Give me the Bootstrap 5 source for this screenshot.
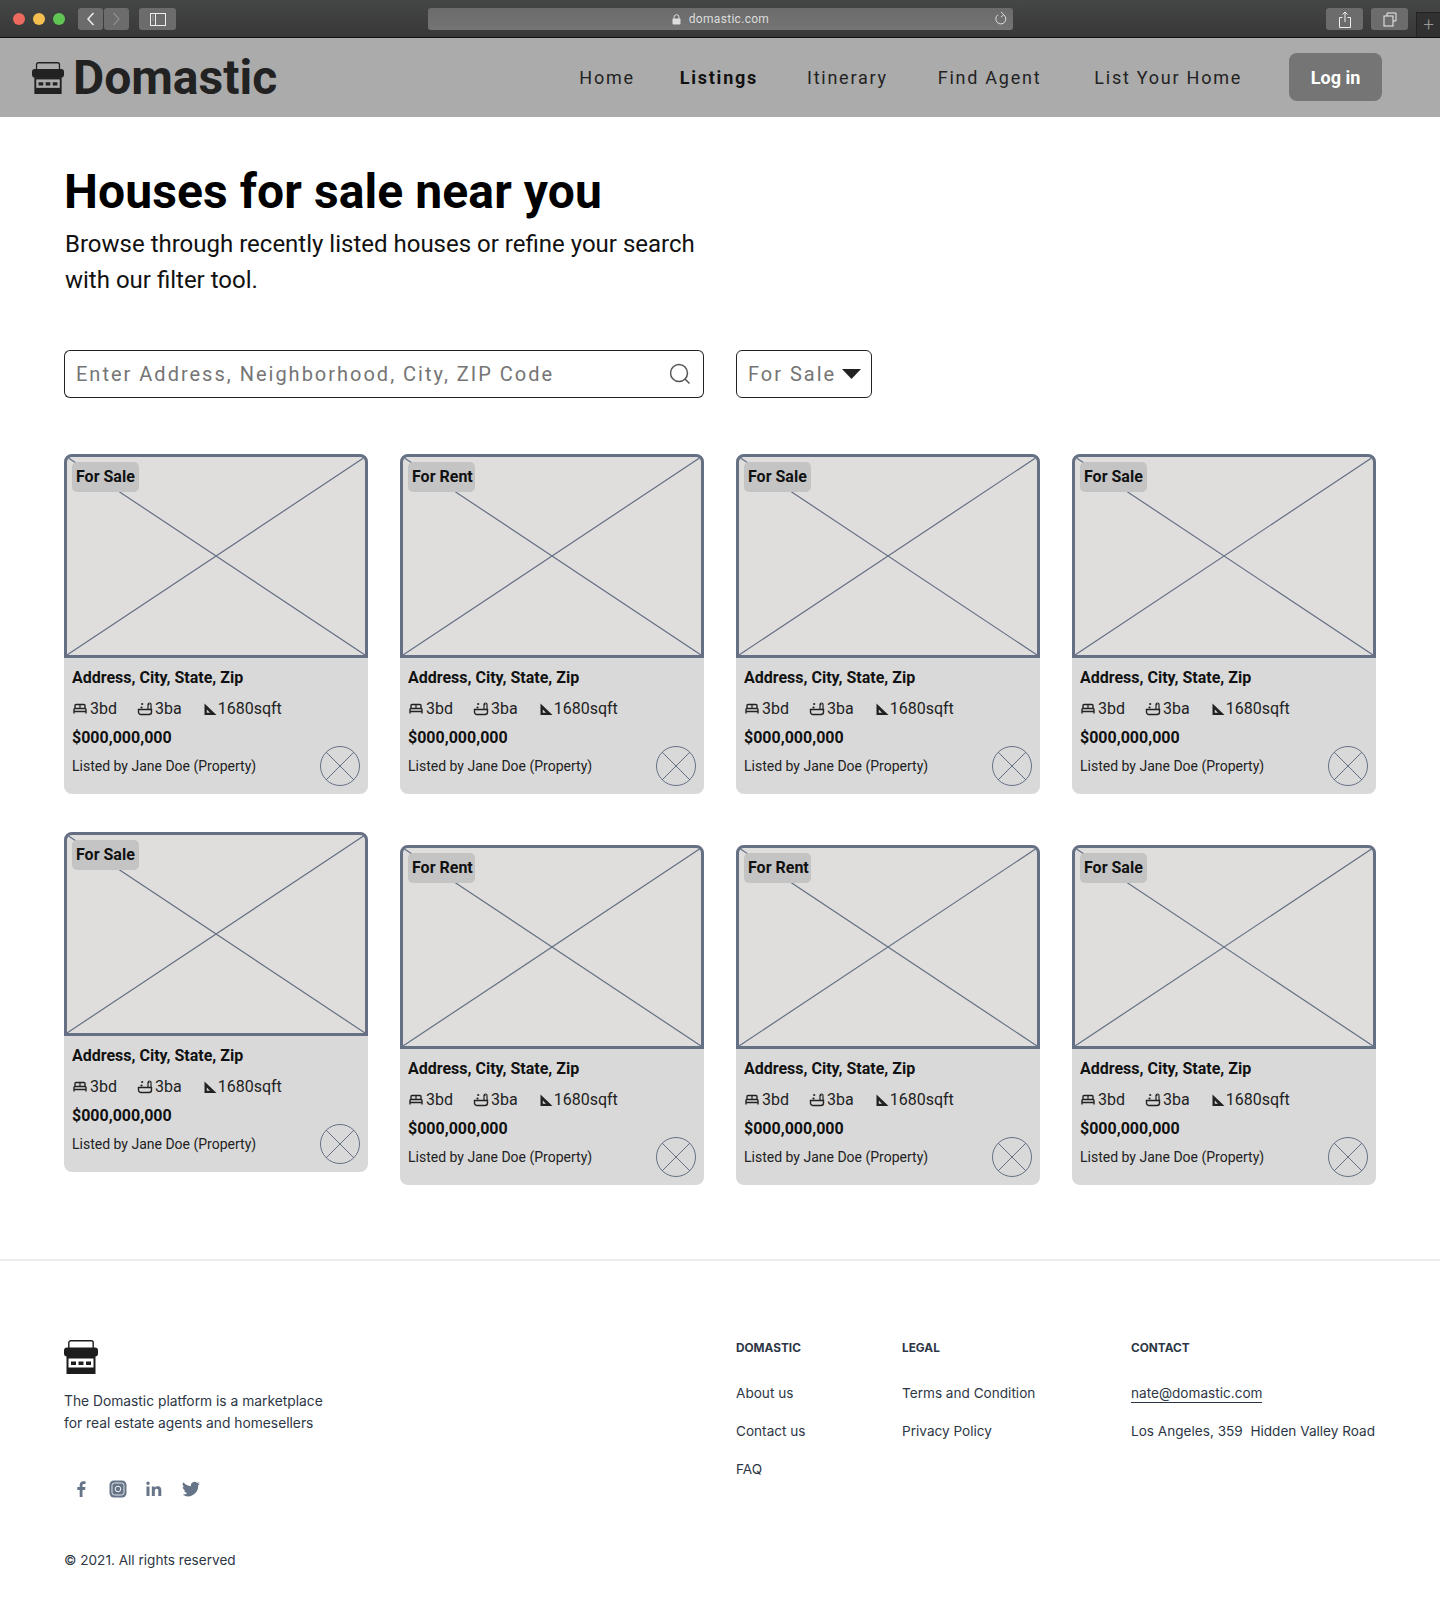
<!DOCTYPE html>
<html lang="en">
<head>
    <meta charset="UTF-8">
    <meta name="viewport" content="width=device-width, initial-scale=1.0">
    <title>Domastic - Listings</title>
    <!-- Bootstrap CSS -->
    <link href="https://cdn.jsdelivr.net/npm/bootstrap@5.3.0/dist/css/bootstrap.min.css" rel="stylesheet">
    <style>
        body { font-family: Roboto, "Liberation Sans", sans-serif; color: #111; background: #fff; min-height: 1612px; }

        /* browser chrome */
        .chrome-bar { height: 38px; background: linear-gradient(#454746, #373837); border-bottom: 1px solid #111; padding: 8px 0 0 13px; }
        .dot { width: 12px; height: 12px; border-radius: 50%; margin-right: 8px; margin-top: 5px; }
        .dot-red { background: #ec6a5e; }
        .dot-yellow { background: #f4bf4f; }
        .dot-green { background: #61c554; }
        .chrome-nav { margin-left: 5px; gap: 1px; }
        .chrome-btn { width: 25px; height: 22px; background: #6b6c6b; border-radius: 3px; border: 0; padding: 0; display: flex; align-items: center; justify-content: center; }
        .chrome-btn-wide { width: 37px; }
        .chrome-side { margin-left: 10px; }
        .chrome-share { margin-left: 313px; }
        .chrome-url { width: 585px; height: 22px; margin-left: 252px; background: linear-gradient(#6a6b6a, #737473); border-radius: 3px; color: #ddd; font-size: 12px; letter-spacing: .3px; font-family: Roboto, "Liberation Sans", sans-serif; position: relative; }
        .chrome-reload { position: absolute; right: 5px; top: 3px; }
        .chrome-plus { width: 24px; height: 25px; margin-top: 4px; border-left: 1px solid #222; border-top: 1px solid #222; background: #303130; color: #999; font-size: 19px; line-height: 24px; text-align: center; font-weight: 300; }

        /* nav */
        .top-nav { --store-hole: #ababab; background: #ababab; height: 79px; padding: 0 58px 1px 32px; }
        .brand-text { font-size: 48px; font-weight: 700; color: #222; line-height: 1; }
        .top-nav .navbar-brand { padding: 2px 0 0; margin: 0; gap: 9px; }
        .top-nav .navbar-nav { margin-right: 47px; }
        .top-nav .nav-link { font-size: 18px; letter-spacing: 1.75px; color: #222; padding: 0; }
        .top-nav .nav-link.active { font-weight: 700; color: #111; }
        .top-nav .nav-item:nth-child(2) { margin-left: 45px; }
        .top-nav .nav-item:nth-child(3) { margin-left: 49px; }
        .top-nav .nav-item:nth-child(4) { margin-left: 50px; }
        .top-nav .nav-item:nth-child(5) { margin-left: 53px; }
        .login-btn { width: 93px; height: 48px; background: #757575; color: #fff; font-size: 18px; font-weight: 700; border: 0; border-radius: 8px; }

        /* intro */
        .page-wrap { padding: 0 64px; }
        .page-title { font-size: 48px; font-weight: 700; line-height: 56px; letter-spacing: .1px; color: #000; margin: 47px 0 0; }
        .page-sub { font-size: 24px; line-height: 36px; width: 660px; margin: 6px 0 0 1px; color: #111; }

        /* filters */
        .filter-row { margin-top: 52px; gap: 32px; }
        .search-group { width: 640px; height: 48px; }
        .search-group .form-control { border: 1px solid #222; border-right: 0; border-radius: 6px 0 0 6px; font-size: 20px; letter-spacing: 2px; padding: 0 11px; color: #757575; }
        .search-group .form-control::placeholder { color: #757575; }
        .search-group .input-group-text { background: #fff; border: 1px solid #222; border-left: 0; border-radius: 0 6px 6px 0; padding: 0 12px 0 0; }
        .status-btn { width: 136px; height: 48px; border: 1px solid #222; border-radius: 6px; background: #fff; color: #757575; font-size: 20px; letter-spacing: 2px; padding: 0 0 0 11px; display: flex; align-items: center; gap: 6px; }

        /* listing cards */
        .list-grid { --bs-gutter-x: 32px; --bs-gutter-y: 0; }
        .list-grid-one { margin-top: 56px; }
        .list-grid-two { margin-top: 51px; }
        .raised { margin-top: -13px; }
        .tile { background: #d9d9d9; border-radius: 8px; height: 340px; }
        .tile-photo { position: relative; height: 204px; background: #dfdedd; border: 3px solid #667085; border-radius: 8px 8px 0 0; overflow: hidden; }
        .tile-photo svg { display: block; width: 100%; height: 100%; }
        .tile-tag { position: absolute; left: 5px; top: 5px; width: 67px; height: 30px; line-height: 30px; padding-left: 4px; background: #c4c4c4; border-radius: 5px; font-size: 16px; font-weight: 700; color: #111; }
        .tile-body { padding: 10px 8px 0; position: relative; }
        .tile-addr { font-size: 16px; font-weight: 700; line-height: 20px; color: #111; }
        .tile-specs { font-size: 16px; line-height: 20px; margin-top: 11px; color: #222; gap: 20px; }
        .tile-spec { display: flex; align-items: center; gap: 2px; }
        .tile-spec:last-child { gap: 0; }
        .tile-price { font-size: 16px; font-weight: 700; line-height: 20px; margin-top: 9px; color: #111; }
        .tile-owner { font-size: 14px; line-height: 20px; margin-top: 8px; color: #222; }
        .tile-avatar { position: absolute; right: 8px; top: 88px; }

        /* footer */
        .site-foot { --store-hole: #fff; border-top: 2px solid #ececec; margin-top: 74px; padding: 79px 62px 0 64px; font-family: Inter, "Liberation Sans", sans-serif; color: #2d3645; font-size: 13.6px; }
        .foot-about { width: 672px; }
        .foot-about p { font-size: 13.8px; line-height: 22px; margin: 16px 0 0; }
        .foot-social { margin: 46px 0 0 8px; gap: 18.5px; align-items: center; }
        .foot-copy { margin-top: 52px; }
        .foot-col { margin-top: 1px; }
        .foot-col-one { width: 166px; }
        .foot-col-two { width: 229px; }
        .foot-head { font-size: 11.8px; font-weight: 700; line-height: 14px; margin-bottom: 28px; color: #2d3645; }
        .foot-col a, .foot-col span { display: block; line-height: 20px; margin-bottom: 18px; color: #2d3645; text-decoration: none; white-space: nowrap; }
        .foot-col a.foot-mail { display: inline-block; border-bottom: 1px solid #2d3645; line-height: 18px; margin-bottom: 18px; }
    </style>
</head>
<body>
<!-- Store icon used in navbar and footer -->
<svg width="0" height="0" class="position-absolute">
    <symbol id="store" viewBox="0 0 34 34">
        <rect x="4.800" y=".8" width="24.400" height="9" rx="2" fill="none" stroke="currentColor" stroke-width="1.400"/>
        <path d="M3 7.500h28a3 3 0 0 1 3 3v3a3 3 0 0 1-3 3H3a3 3 0 0 1-3-3v-3a3 3 0 0 1 3-3z" fill="currentColor"/>
        <path d="M2.500 16h29v18h-29z" fill="currentColor"/>
        <path d="M4.500 18.500h25v9h-25z" fill="var(--store-hole)"/>
        <path d="M7 21.500h5v3.500H7zM14.500 21.500h5v3.500h-5zM22 21.500h5v3.500h-5z" fill="currentColor"/>
    </symbol>
    <symbol id="bed" viewBox="0 0 16 16">
        <path d="M3 7.500V4.500a1 1 0 0 1 1-1h8a1 1 0 0 1 1 1v3M2 12.500V8.500a1 1 0 0 1 1-1h10a1 1 0 0 1 1 1v4M2 10.500h12" fill="none" stroke="currentColor" stroke-width="1.400"/>
        <path d="M8 3.500v4" stroke="currentColor" stroke-width="1.200"/>
    </symbol>
    <symbol id="bath" viewBox="0 0 16 16">
        <path d="M1.500 8.500h13v2.500a2.500 2.500 0 0 1-2.500 2.500H4A2.500 2.500 0 0 1 1.500 11z" fill="none" stroke="currentColor" stroke-width="1.400"/>
        <path d="M11 8.500V3.500a1.500 1.500 0 0 1 3 0v5M10.500 3.500h2" fill="none" stroke="currentColor" stroke-width="1.200"/>
        <circle cx="4.500" cy="6.500" r="1.100" fill="currentColor"/><circle cx="5.200" cy="3" r="1.100" fill="currentColor"/>
    </symbol>
    <symbol id="square" viewBox="0 0 16 16">
        <path d="M2.500 2.500v11.500h12z" fill="currentColor"/>
        <path d="M4.800 8.500v3.200h3.200z" fill="#d9d9d9"/>
    </symbol>
</svg>

<!-- Browser bar -->
<div class="chrome-bar d-flex">
    <div class="dot dot-red"></div>
    <div class="dot dot-yellow"></div>
    <div class="dot dot-green"></div>
    <div class="d-flex chrome-nav">
        <button class="chrome-btn" aria-label="Back"><svg width="9" height="14" viewBox="0 0 9 14"><path d="M7.500 1L2 7l5.500 6" fill="none" stroke="#eee" stroke-width="1.500"/></svg></button>
        <button class="chrome-btn" aria-label="Forward"><svg width="9" height="14" viewBox="0 0 9 14"><path d="M1.500 1L7 7l-5.500 6" fill="none" stroke="#8c8c8c" stroke-width="1.300"/></svg></button>
    </div>
    <button class="chrome-btn chrome-btn-wide chrome-side" aria-label="Sidebar"><svg width="16" height="13" viewBox="0 0 16 13"><rect x=".5" y=".5" width="15" height="12" fill="none" stroke="#eee"/><path d="M5.500 0v13" stroke="#eee"/><path d="M2 3h2M2 5h2M2 7h2" stroke="#999"/></svg></button>
    <div class="chrome-url d-flex align-items-center justify-content-center gap-2">
        <svg width="9" height="11" viewBox="0 0 9 11"><path d="M2 5V3.200a2.500 2.500 0 0 1 5 0V5" fill="none" stroke="#ddd"/><rect x=".5" y="4.500" width="8" height="6" rx="1" fill="#ddd"/></svg>
        <span>domastic.com</span>
        <svg class="chrome-reload" width="14" height="16" viewBox="0 0 14 16"><path d="M9.500 3.700A5 5 0 1 1 4 3.800M7 1l2.800 2.700L7 6" fill="none" stroke="#ddd"/></svg>
    </div>
    <button class="chrome-btn chrome-btn-wide chrome-share" aria-label="Share"><svg width="12" height="17" viewBox="0 0 12 17"><path d="M3.500 6.500H.5v10h11v-10h-3M6 11V1M3.500 3.500L6 1l2.500 2.500" fill="none" stroke="#eee"/></svg></button>
    <button class="chrome-btn chrome-btn-wide ms-2" aria-label="Tabs"><svg width="14" height="15" viewBox="0 0 14 15"><path d="M4 4V1h9v8h-3" fill="none" stroke="#eee"/><rect x="1" y="4" width="9" height="10" fill="none" stroke="#eee"/></svg></button>
    <div class="chrome-plus ms-auto">+</div>
</div>

<!-- Navbar -->
<nav class="navbar top-nav flex-nowrap">
    <a class="navbar-brand d-flex align-items-center" href="#">
        <svg width="32" height="32" style="color:#222"><use href="#store"/></svg>
        <span class="brand-text">Domastic</span>
    </a>
    <div class="d-flex align-items-center">
        <ul class="navbar-nav flex-row align-items-center">
            <li class="nav-item"><a class="nav-link" href="#">Home</a></li>
            <li class="nav-item"><a class="nav-link active" href="#">Listings</a></li>
            <li class="nav-item"><a class="nav-link" href="#">Itinerary</a></li>
            <li class="nav-item"><a class="nav-link" href="#">Find Agent</a></li>
            <li class="nav-item"><a class="nav-link" href="#">List Your Home</a></li>
        </ul>
        <button class="btn login-btn">Log in</button>
    </div>
</nav>

<!-- Main Content -->
<main class="page-wrap">
    <h1 class="page-title">Houses for sale near you</h1>
    <p class="page-sub">Browse through recently listed houses or refine your search with our filter tool.</p>

    <div class="d-flex filter-row">
        <div class="input-group search-group">
            <input type="text" class="form-control" placeholder="Enter Address, Neighborhood, City, ZIP Code">
            <span class="input-group-text">
                <svg width="22" height="22" viewBox="0 0 22 22"><circle cx="10" cy="10" r="8.500" fill="none" stroke="#555" stroke-width="1.500"/><path d="M16 16l4.500 4.500" stroke="#555" stroke-width="1.500"/></svg>
            </span>
        </div>
        <button class="status-btn" type="button">For Sale
            <svg width="19" height="10" viewBox="0 0 19 10"><path d="M0 0h19L9.500 10z" fill="#222"/></svg>
        </button>
    </div>

    <!-- Listings will be added here -->
    <div class="row list-grid list-grid-one align-items-start" id="row-one"></div>
    <div class="row list-grid list-grid-two align-items-start" id="row-two"></div>
</main>

<!-- Footer -->
<footer class="site-foot d-flex">
    <div class="foot-about">
        <svg width="34" height="34" class="d-block" style="color:#1d1d1d"><use href="#store"/></svg>
        <p>The Domastic platform is a marketplace<br>for real estate agents and homesellers</p>
        <div class="d-flex foot-social">
            <svg width="18" height="18" viewBox="0 0 18 18"><path d="M10.500 17V10h2.600l.4-2.900h-3V5.300c0-.8.300-1.400 1.500-1.400h1.500V1.300c-.4 0-1.200-.1-2.200-.1-2.200 0-3.600 1.300-3.600 3.800v2.100H5.300V10h2.400v7z" fill="#667488"/></svg>
            <svg width="18" height="18" viewBox="0 0 18 18"><rect width="17" height="17" x=".5" y=".5" rx="4.500" fill="#667488"/><rect x="3" y="3" width="12" height="12" rx="2.500" fill="none" stroke="#fff" stroke-width=".8"/><circle cx="9" cy="9" r="2.800" fill="none" stroke="#fff" stroke-width=".9"/></svg>
            <svg width="18" height="18" viewBox="0 0 18 18"><path d="M1.500 6.500h3V16h-3zM3 1.500a1.700 1.700 0 1 1 0 3.500 1.700 1.700 0 0 1 0-3.500zM6.800 6.500h2.900v1.300c.5-.9 1.600-1.600 3-1.600 3 0 3.600 2 3.600 4.500V16h-3v-4.700c0-1.200 0-2.500-1.600-2.500s-1.900 1.200-1.900 2.400V16h-3z" fill="#667488"/></svg>
            <svg width="18" height="16" viewBox="0 0 18 16"><path d="M18 2.400c-.7.300-1.400.5-2.100.6.800-.5 1.300-1.200 1.600-2-.7.400-1.500.7-2.300.9A3.700 3.700 0 0 0 8.900 5.200 10.500 10.500 0 0 1 1.300 1.300a3.700 3.700 0 0 0 1.100 4.900c-.6 0-1.200-.2-1.700-.5 0 1.800 1.300 3.300 3 3.700-.5.100-1.100.2-1.700.1.500 1.500 1.800 2.500 3.400 2.600A7.400 7.400 0 0 1 0 13.600 10.500 10.500 0 0 0 16.200 4.300c.7-.5 1.300-1.100 1.800-1.900z" fill="#667488"/></svg>
        </div>
        <div class="foot-copy">© 2021. All rights reserved</div>
    </div>
    <div class="foot-col foot-col-one">
        <div class="foot-head">DOMASTIC</div>
        <a href="#">About us</a>
        <a href="#">Contact us</a>
        <a href="#">FAQ</a>
    </div>
    <div class="foot-col foot-col-two">
        <div class="foot-head">LEGAL</div>
        <a href="#">Terms and Condition</a>
        <a href="#">Privacy Policy</a>
    </div>
    <div class="foot-col">
        <div class="foot-head">CONTACT</div>
        <a class="foot-mail" href="#">nate@domastic.com</a>
        <span>Los Angeles, 359&nbsp; Hidden Valley Road</span>
    </div>
</footer>

<!-- Bootstrap JS -->
<script src="https://cdn.jsdelivr.net/npm/bootstrap@5.3.0/dist/js/bootstrap.bundle.min.js"></script>

<script>
    // Build one listing card
    function listingCard(status, raised) {
        return `
        <div class="col-3">
            <div class="tile ${raised ? 'raised' : ''}">
                <div class="tile-photo">
                    <svg viewBox="0 0 298 198" preserveAspectRatio="none"><path d="M0 0L298 198M298 0L0 198" stroke="#667085" stroke-width="1.200" fill="none"/></svg>
                    <div class="tile-tag">${status}</div>
                </div>
                <div class="tile-body">
                    <div class="tile-addr">Address, City, State, Zip</div>
                    <div class="tile-specs d-flex">
                        <span class="tile-spec"><svg width="16" height="16"><use href="#bed"/></svg>3bd</span>
                        <span class="tile-spec"><svg width="16" height="16"><use href="#bath"/></svg>3ba</span>
                        <span class="tile-spec"><svg width="16" height="16"><use href="#square"/></svg>1680sqft</span>
                    </div>
                    <div class="tile-price">$000,000,000</div>
                    <div class="tile-owner">Listed by Jane Doe (Property)</div>
                    <svg class="tile-avatar" width="40" height="40" viewBox="0 0 40 40"><circle cx="20" cy="20" r="19.500" fill="none" stroke="#667085"/><path d="M6 6l28 28M34 6L6 34" stroke="#667085"/></svg>
                </div>
            </div>
        </div>`;
    }

    document.getElementById('row-one').innerHTML = ['For Sale', 'For Rent', 'For Sale', 'For Sale'].map(s => listingCard(s, false)).join('');
    document.getElementById('row-two').innerHTML = ['For Sale', 'For Rent', 'For Rent', 'For Sale'].map((s, i) => listingCard(s, i === 0)).join('');
</script>
</body>
</html>
